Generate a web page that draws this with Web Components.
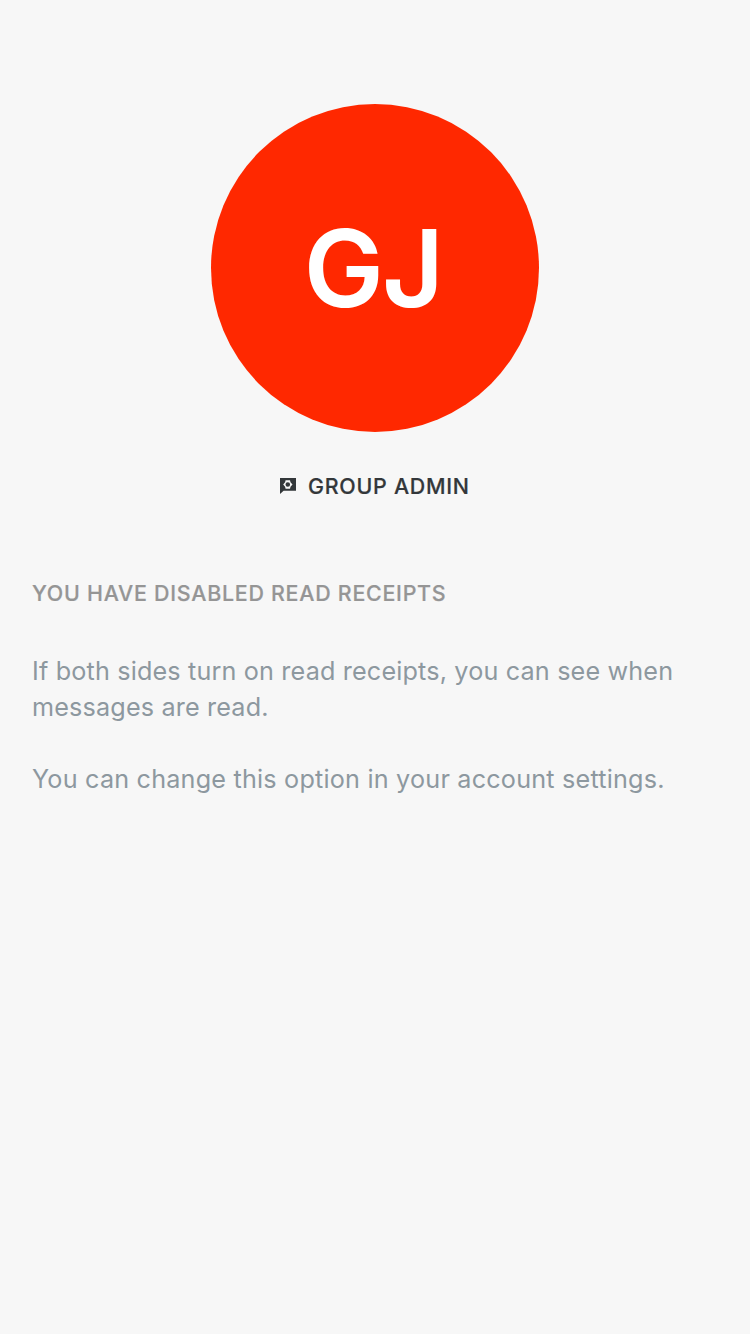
<!DOCTYPE html>
<html lang="en">
<head>
<meta charset="utf-8">
<title>Group admin</title>
<style>
html, body { margin: 0; background: #f7f7f7; }
body { min-height: 1334px; font-family: Inter, "Liberation Sans", sans-serif; }
</style>
</head>
<body>
<profile-page>
  <user-avatar>GJ</user-avatar>
  <role-label>GROUP ADMIN</role-label>
  <receipt-info>
    <span slot="title">YOU HAVE DISABLED READ RECEIPTS</span>
    <info-text>If both sides turn on read receipts, you can see when<br>messages are read.</info-text>
    <info-text>You can change this option in your account settings.</info-text>
  </receipt-info>
</profile-page>
<script>
const define = (name, markup) => customElements.define(name, class extends HTMLElement {
  constructor() {
    super();
    this.attachShadow({ mode: 'open' }).innerHTML = markup;
  }
});

define('profile-page', `<style>
  :host { display: flex; flex-direction: column; align-items: center; box-sizing: border-box; width: 750px; min-height: 1334px; padding-top: 104px; background: #f7f7f7; }
</style><slot></slot>`);

define('user-avatar', `<style>
  :host { display: flex; align-items: center; justify-content: center; box-sizing: border-box; width: 328px; height: 328px; padding: 0 4px 0 0; border-radius: 50%; background: #ff2800; color: #fff; font-size: 107px; font-weight: 600; line-height: 130px; }
  span { display: block; letter-spacing: -1.8px; }
</style><span><slot></slot></span>`);

define('role-label', `<style>
  :host { display: flex; align-items: center; width: 190px; height: 28px; margin-top: 40px; color: #33373a; font-size: 21.4px; font-weight: 500; line-height: 28px; letter-spacing: .73px; white-space: nowrap; -webkit-text-stroke: .2px currentColor; }
  svg { display: block; flex: none; width: 16px; height: 16px; margin-right: 12px; }
</style>
<svg viewBox="0 0 16 16"><path fill="currentColor" d="M0 0h16v12.7H3.6L0 16z"/><path fill="#f7f7f7" fill-rule="evenodd" d="M5.6 2.2h4.4l.5 2 2 2.3-2 2.3-.5 2H5.6l-.5-2-1.9-2.3 1.9-2.3zM7.8 4.2a2.3 2.3 0 1 0 0 4.6a2.3 2.3 0 1 0 0-4.6z"/></svg>
<span><slot></slot></span>`);

define('receipt-info', `<style>
  :host { display: flex; flex-direction: column; box-sizing: border-box; width: 100%; margin-top: 79px; padding: 0 32px; }
  header { margin-bottom: 46px; color: #959595; font-size: 21.4px; font-weight: 500; line-height: 28px; letter-spacing: .74px; white-space: nowrap; -webkit-text-stroke: .2px currentColor; }
  div { display: flex; flex-direction: column; gap: 36px; }
</style><header><slot name="title"></slot></header><div><slot></slot></div>`);

define('info-text', `<style>
  :host { display: block; color: #8d989f; font-size: 25.2px; line-height: 36px; letter-spacing: .16px; white-space: nowrap; }
  :host(:last-child) { letter-spacing: .2px; }
</style><slot></slot>`);
</script>
</body>
</html>
